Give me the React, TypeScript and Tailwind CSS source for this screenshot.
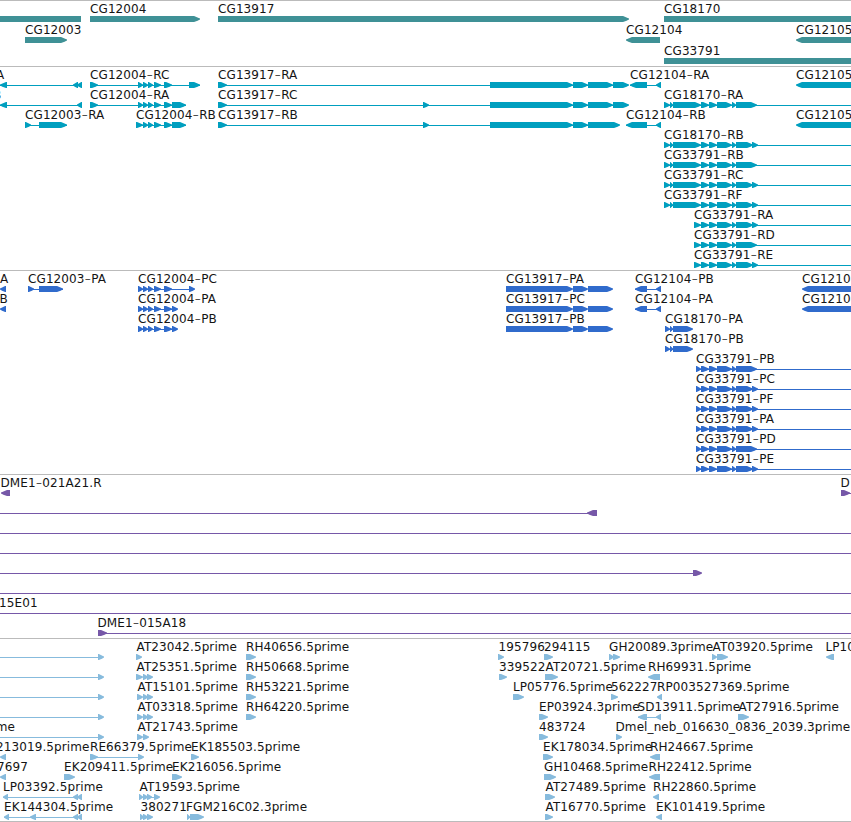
import React from "react";

type Span = [number, number];

interface Feature {
  row: number;
  name?: string;
  x: number;
  anchor?: "start" | "end";
  spans: Span[];
  line?: Span;
  left?: boolean;
}

interface Track {
  id: string;
  color: string;
  height: number;
  pitch: number;
  features: Feature[];
}

const f = (row: number, name: string, x: number, spans: Span[], line?: Span): Feature => ({ row, name, x, spans, line });
const r = (row: number, name: string, x: number, spans: Span[], line?: Span): Feature => ({ row, name, x, spans, line, left: true });

const genes: Feature[] = [
  { row: 0, x: 0, spans: [[-20, 81]], left: true },
  f(0, "CG12004", 90, [[90, 200]]),
  f(0, "CG13917", 218, [[218, 629]]),
  f(0, "CG18170", 664, [[664, 900]]),
  f(1, "CG12003", 25, [[25, 67]]),
  r(1, "CG12104", 626, [[626, 660]]),
  r(1, "CG12105", 796, [[796, 900]]),
  f(2, "CG33791", 664, [[664, 900]]),
];

const mid12004: Span[] = [[138, 143], [143, 148], [148, 153], [154, 161], [164, 172]];
const body: Span[] = [[701, 709], [709, 717], [717, 732], [732, 736]];
const longEnd: Span[] = [[736, 757]];
const splitEnd: Span[] = [[736, 753], [752, 758]];
const start18170: Span[] = [[664, 670], [670, 673], [673, 701]];

const transcripts: Feature[] = [
  r(0, "A", -4, [[0, 7], [73, 78], [77, 82]], [0, 82]),
  r(1, "B", -7, [[0, 7], [77, 82]], [0, 82]),
  f(2, "CG12003-RA", 25, [[25, 31], [39, 67]], [25, 67]),
  f(0, "CG12004-RC", 90, [[90, 98], ...mid12004, [189, 200]], [90, 200]),
  f(1, "CG12004-RA", 90, [[90, 98], ...mid12004, [172, 186]], [90, 186]),
  f(2, "CG12004-RB", 136, [[136, 143], ...mid12004.slice(1), [172, 186]], [136, 186]),
  f(0, "CG13917-RA", 218, [[218, 227], [490, 573], [573, 588], [588, 613], [613, 629]], [218, 628]),
  f(1, "CG13917-RC", 218, [[218, 227], [423, 429], [490, 573], [573, 588], [588, 613], [613, 629]], [218, 628]),
  f(2, "CG13917-RB", 218, [[218, 227], [423, 429], [490, 573], [573, 588], [588, 620]], [218, 619]),
  r(0, "CG12104-RA", 630, [[630, 647], [656, 661]], [630, 661]),
  r(2, "CG12104-RB", 626, [[626, 647], [656, 661]], [626, 661]),
  r(0, "CG12105-RA", 796, [[796, 900]]),
  r(2, "CG12105-RB", 796, [[796, 900]]),
  f(1, "CG18170-RA", 664, [...start18170, ...body, ...longEnd], [664, 851]),
  f(3, "CG18170-RB", 664, [...start18170, ...body, ...splitEnd], [664, 851]),
  f(4, "CG33791-RB", 664, [...start18170, ...body, ...longEnd], [664, 851]),
  f(5, "CG33791-RC", 664, [...start18170, ...body, ...splitEnd], [664, 851]),
  f(6, "CG33791-RF", 664, [...start18170, ...body, ...splitEnd], [664, 851]),
  f(7, "CG33791-RA", 694, [[694, 701], ...body, ...splitEnd], [694, 851]),
  f(8, "CG33791-RD", 694, [[694, 701], ...body, ...longEnd], [694, 851]),
  f(9, "CG33791-RE", 694, [[694, 701], ...body, ...splitEnd], [694, 851]),
];

const coding: Feature[] = [
  r(0, "A", 0, [[0, 6]]),
  r(1, "B", -0.5, [[0, 6]]),
  f(0, "CG12003-PA", 28, [[28, 34], [39, 63]], [28, 63]),
  f(0, "CG12004-PC", 138, [...mid12004, [189, 195]], [138, 194]),
  f(1, "CG12004-PA", 138, [...mid12004, [172, 178]], [138, 177]),
  f(2, "CG12004-PB", 138, [...mid12004, [172, 178]], [138, 177]),
  ...["PA", "PC", "PB"].map((s, i) => f(i, `CG13917-${s}`, 506, [[506, 573], [573, 588], [588, 613]])),
  r(0, "CG12104-PB", 635, [[635, 647], [656, 661]], [635, 661]),
  r(1, "CG12104-PA", 635, [[635, 647], [656, 661]], [635, 661]),
  r(0, "CG12105-PA", 802, [[802, 900]]),
  r(1, "CG12105-PB", 802, [[802, 900]]),
  f(2, "CG18170-PA", 665, [[665, 670], [670, 673], [673, 693]], [665, 692]),
  f(3, "CG18170-PB", 665, [[665, 670], [670, 673], [673, 693]], [665, 692]),
  ...["PB", "PC", "PF", "PA", "PD", "PE"].map((s, i) =>
    f(4 + i, `CG33791-${s}`, 696, [[696, 701], ...body, ...(i === 0 || i === 4 ? longEnd : splitEnd)], [696, 851])
  ),
];

const clones: Feature[] = [
  r(0, "DME1-021A21.R", 0.5, [[1, 10]]),
  f(0, "D", 840.5, [[841, 850]], [841, 851]),
  { row: 1, x: 0, spans: [[587, 597]], line: [0, 597], left: true },
  { row: 2, x: 0, spans: [], line: [0, 851] },
  { row: 3, x: 0, spans: [], line: [0, 851] },
  { row: 4, x: 0, spans: [[693, 702]], line: [0, 701] },
  { row: 5, x: 0, spans: [], line: [0, 851] },
  f(6, "15E01", -1, [], [0, 851]),
  f(7, "DME1-015A18", 97.5, [[98, 107]], [98, 851]),
];

const ests: Feature[] = [
  ...[0, 1, 2, 3, 4].map((row): Feature => ({ row, x: 0, spans: [[98, 104]], line: [0, 103] })),
  f(0, "AT23042.5prime", 136.5, [[136, 142]]),
  f(1, "AT25351.5prime", 136.5, [[136, 143], [143, 148], [147, 153]]),
  f(2, "AT15101.5prime", 137.5, [[137, 143], [143, 148], [147, 153]]),
  f(3, "AT03318.5prime", 137.5, [[137, 143], [143, 148], [147, 153]]),
  f(4, "AT21743.5prime", 137.5, [[137, 143], [143, 149]]),
  ...["RH40656.5prime", "RH50668.5prime", "RH53221.5prime", "RH64220.5prime"].map((s, i) => f(i, s, 246, [[246, 256]])),
  f(0, "195796", 498.5, [[498, 504]]),
  f(0, "294115", 544, [[544, 553]]),
  f(0, "GH20089.3prime", 609, [[609, 614], [613, 620]]),
  f(0, "AT03920.5prime", 712.5, [[712, 717], [717, 728]]),
  r(0, "LP10045.5prime", 825.5, [[826, 834]]),
  f(1, "339522", 499, [[499, 507]]),
  f(1, "AT20721.5prime", 545.5, [[545, 558]]),
  r(1, "RH69931.5prime", 648, [[648, 660]]),
  f(2, "LP05776.5prime", 513, [[513, 524]]),
  f(2, "562227", 611, [[611, 618]]),
  r(2, "RP003527369.5prime", 657, [[657, 662]]),
  f(3, "EP03924.3prime", 539, [[539, 548]]),
  r(3, "SD13911.5prime", 637.5, [[638, 647], [656, 661]], [638, 661]),
  f(3, "AT27916.5prime", 738.5, [[738, 749]]),
  { row: 4, name: "prime", x: 15, anchor: "end", spans: [] },
  f(4, "483724", 539, [[539, 548]]),
  f(4, "Dmel_neb_016630_0836_2039.3prime", 615.5, [[616, 622]]),
  { row: 5, name: "EK213019.5prime", x: 89.5, anchor: "end", spans: [[0, 6]], left: true },
  f(5, "RE66379.5prime", 90, [[90, 98], [138, 144]], [90, 143]),
  f(5, "EK185503.5prime", 191, [[191, 199]]),
  f(5, "EK178034.5prime", 543, [[543, 553]]),
  r(5, "RH24667.5prime", 650, [[650, 660]]),
  { row: 6, name: "7697", x: 28, anchor: "end", spans: [[0, 6]], left: true },
  f(6, "EK209411.5prime", 64, [[64, 75]]),
  f(6, "EK216056.5prime", 172, [[172, 182]]),
  f(6, "GH10468.5prime", 544, [[544, 556]]),
  r(6, "RH22412.5prime", 648.5, [[649, 660]]),
  r(7, "LP03392.5prime", 3, [[3, 8], [73, 78], [77, 82]], [3, 82]),
  f(7, "AT19593.5prime", 139.5, [[139, 143], [143, 148], [147, 152], [154, 160]], [139, 158]),
  f(7, "AT27489.5prime", 545.5, [[545, 555]]),
  r(7, "RH22860.5prime", 653, [[653, 659]]),
  r(8, "EK144304.5prime", 4, [[4, 9], [30, 36], [73, 78], [77, 82]], [4, 82]),
  f(8, "380271", 140.5, [[140, 144], [143, 148], [147, 153]]),
  f(8, "FGM216C02.3prime", 186, [[187, 190], [190, 204]]),
  f(8, "AT16770.5prime", 545.5, [[545, 553]]),
  r(8, "EK101419.5prime", 656, [[656, 662]]),
];

const tracks: Track[] = [
  { id: "genes", color: "#3f9196", height: 65, pitch: 21, features: genes },
  { id: "transcripts", color: "#009fbf", height: 203, pitch: 20, features: transcripts },
  { id: "coding", color: "#306bcc", height: 203, pitch: 20, features: coding },
  { id: "clones", color: "#7658a8", height: 163, pitch: 20, features: clones },
  { id: "ests", color: "#87bbdd", height: 182, pitch: 20, features: ests },
];

const FIRST_BAR = 15;

// Arrowhead with slightly rounded shoulders and a blunt tip.
function arrowPoints([a, b]: Span, top: number, left?: boolean) {
  const w = Math.min(b - a, 7);
  const k = left ? -1 : 1;
  const tip = left ? a : b;
  const back = left ? b : a;
  const e = top + 6;
  return [
    [back, top],
    [tip - k * w * 0.85, top],
    [tip - k * w * 0.35, top + 1.5],
    [tip, top + 2.6],
    [tip, top + 3.6],
    [tip - k * w * 0.35, e - 1.3],
    [tip - k * w * 0.85, e],
    [back, e],
  ]
    .map((p) => p.join(","))
    .join(" ");
}

function Label({ name, x, y, anchor }: { name: string; x: number; y: number; anchor?: "start" | "end" }) {
  const [head, tail] = name.split("-");
  return (
    <text x={x} y={y} textAnchor={anchor ?? "start"} className="fill-[#141414] text-[12px] tracking-[0.1px]">
      {head}
      {tail && (
        <>
          <tspan dy={1} className="text-[18px] font-extralight">-</tspan>
          <tspan dy={-1}>{tail}</tspan>
        </>
      )}
    </text>
  );
}

function TrackPanel({ track }: { track: Track }) {
  return (
    <section className="border-t border-[#bbbbbb]">
      <svg width={851} height={track.height} className="block overflow-hidden">
        {track.features.map((ft, i) => {
          const top = FIRST_BAR + ft.row * track.pitch;
          return (
            <g key={i} fill={track.color}>
              {ft.line && <rect x={ft.line[0]} y={top + 3} width={ft.line[1] - ft.line[0]} height={1} />}
              {ft.spans.map((s, j) => (
                <polygon key={j} points={arrowPoints(s, top, ft.left)} />
              ))}
              {ft.name && <Label name={ft.name} x={ft.x} y={top - 3} anchor={ft.anchor} />}
            </g>
          );
        })}
      </svg>
    </section>
  );
}

export default function App() {
  return (
    <main className="flex h-[822px] w-[851px] flex-col overflow-hidden border-b border-[#bbbbbb] bg-white font-['DejaVu_Sans',sans-serif]">
      {tracks.map((t) => (
        <TrackPanel key={t.id} track={t} />
      ))}
    </main>
  );
}
